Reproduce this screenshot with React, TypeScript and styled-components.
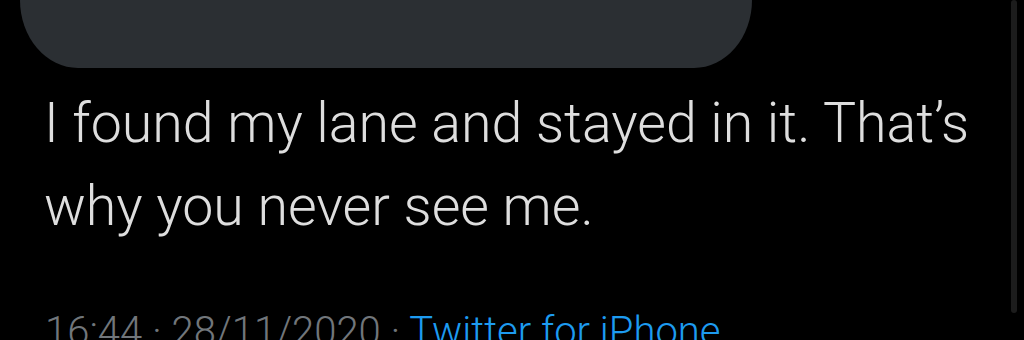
import styled, { createGlobalStyle } from "styled-components";

const GlobalStyle = createGlobalStyle`
  html, body {
    margin: 0;
    padding: 0;
    background: #000;
    overflow: hidden;
  }
`;

const Page = styled.div`
  position: relative;
  width: 1024px;
  height: 340px;
  background: #000;
  overflow: hidden;
`;

const Tweet = styled.div`
  display: flex;
  flex-direction: column;
  padding: 0 0 0 20px;
`;

const MediaCard = styled.div`
  width: 732px;
  height: 68px;
  background: #2b2f33;
  border-bottom-left-radius: 58px 68px;
  border-bottom-right-radius: 58px 68px;
`;

const Body = styled.p`
  margin: 14px 0 0 24px;
  width: 960px;
  font-family: Roboto, "Liberation Sans", sans-serif;
  font-weight: 300;
  font-size: 55.5px;
  line-height: 83px;
  color: #dedede;
`;

const Meta = styled.div`
  margin: 62px 0 0 25px;
  font-family: Roboto, "Liberation Sans", sans-serif;
  font-weight: 300;
  font-size: 40px;
  line-height: 44px;
  color: #71767b;
  white-space: nowrap;
`;

const Source = styled.span`
  color: #1d9bf0;
`;

const Scrollbar = styled.div`
  position: absolute;
  top: 0;
  right: 7px;
  width: 6px;
  height: 313px;
  border-radius: 3px;
  background: #1c1c1c;
`;

export default function App() {
  return (
    <>
      <GlobalStyle />
      <Page>
        <Tweet>
          <MediaCard />
          <Body>I found my lane and stayed in it. That’s why you never see me.</Body>
          <Meta>
            16:44 · 28/11/2020 · <Source>Twitter for iPhone</Source>
          </Meta>
        </Tweet>
        <Scrollbar />
      </Page>
    </>
  );
}
